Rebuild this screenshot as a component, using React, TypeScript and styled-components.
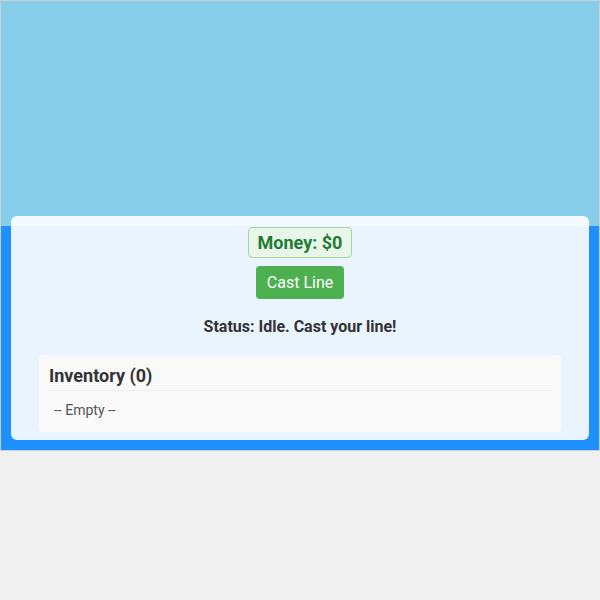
import styled, { createGlobalStyle } from "styled-components";

type Fish = {
    name: string
    price: number
}

const GlobalStyle = createGlobalStyle`
    body {
        margin: 0;
        background: #f0f0f0;
        font-family: Roboto, "Liberation Sans", Arial, sans-serif;
        color: #333;
    }
`

const inventory: Fish[] = []

export default function App() {
    return (
        <>
            <GlobalStyle/>
            <Scene>
                <Panel>
                    <Money>Money: $0</Money>
                    <CastButton>Cast Line</CastButton>
                    <Status>Status: Idle. Cast your line!</Status>
                    <Inventory>
                        <InventoryTitle>Inventory ({inventory.length})</InventoryTitle>
                        <InventoryList>
                            {inventory.length === 0
                                ? <EmptyNote>-- Empty --</EmptyNote>
                                : inventory.map((fish) => (
                                    <EmptyNote key={fish.name}>{fish.name} (${fish.price})</EmptyNote>
                                ))}
                        </InventoryList>
                    </Inventory>
                </Panel>
            </Scene>
        </>
    )
}

const Scene = styled.div`
    box-sizing: border-box;
    width: 600px;
    height: 451px;
    border: 1px solid #c8d0d6;
    background: linear-gradient(to bottom, #87ceeb 0, #87ceeb 225px, #1e90ff 225px, #1e90ff 100%);

    display: flex;
    flex-direction: column;
    justify-content: flex-end;
    padding: 10px;
`

const Panel = styled.div`
    box-sizing: border-box;
    background: rgba(255, 255, 255, 0.9);
    border-radius: 6px;
    padding: 11px 28px 8px;

    display: flex;
    flex-direction: column;
    align-items: center;
`

const Money = styled.div`
    font-size: 18px;
    line-height: 21px;
    font-weight: 700;
    color: #237a36;
    background: #e8f5e9;
    border: 1px solid #a5d6a7;
    border-radius: 4px;
    padding: 4px 9px;
`

const CastButton = styled.button`
    margin-top: 8px;
    font-family: inherit;
    font-size: 16px;
    line-height: 19px;
    color: #fff;
    background: #4caf50;
    border: none;
    border-radius: 4px;
    padding: 7px 11px;
    cursor: pointer;
`

const Status = styled.p`
    margin: 18px 0 0;
    font-size: 16px;
    line-height: 19px;
    font-weight: 700;
    color: #333;
`

const Inventory = styled.section`
    box-sizing: border-box;
    align-self: stretch;
    margin-top: 19px;
    background: #f9f9f9;
    border-radius: 4px;
    padding: 10px 10px 14px;
`

const InventoryTitle = styled.h3`
    margin: 0;
    padding-bottom: 4px;
    border-bottom: 1px solid #eee;
    font-size: 18px;
    line-height: 21px;
    font-weight: 700;
    color: #333;
`

const InventoryList = styled.ul`
    list-style: none;
    margin: 0;
    padding: 11px 5px 0;
`

const EmptyNote = styled.li`
    font-size: 14px;
    line-height: 16px;
    color: #555;
`
